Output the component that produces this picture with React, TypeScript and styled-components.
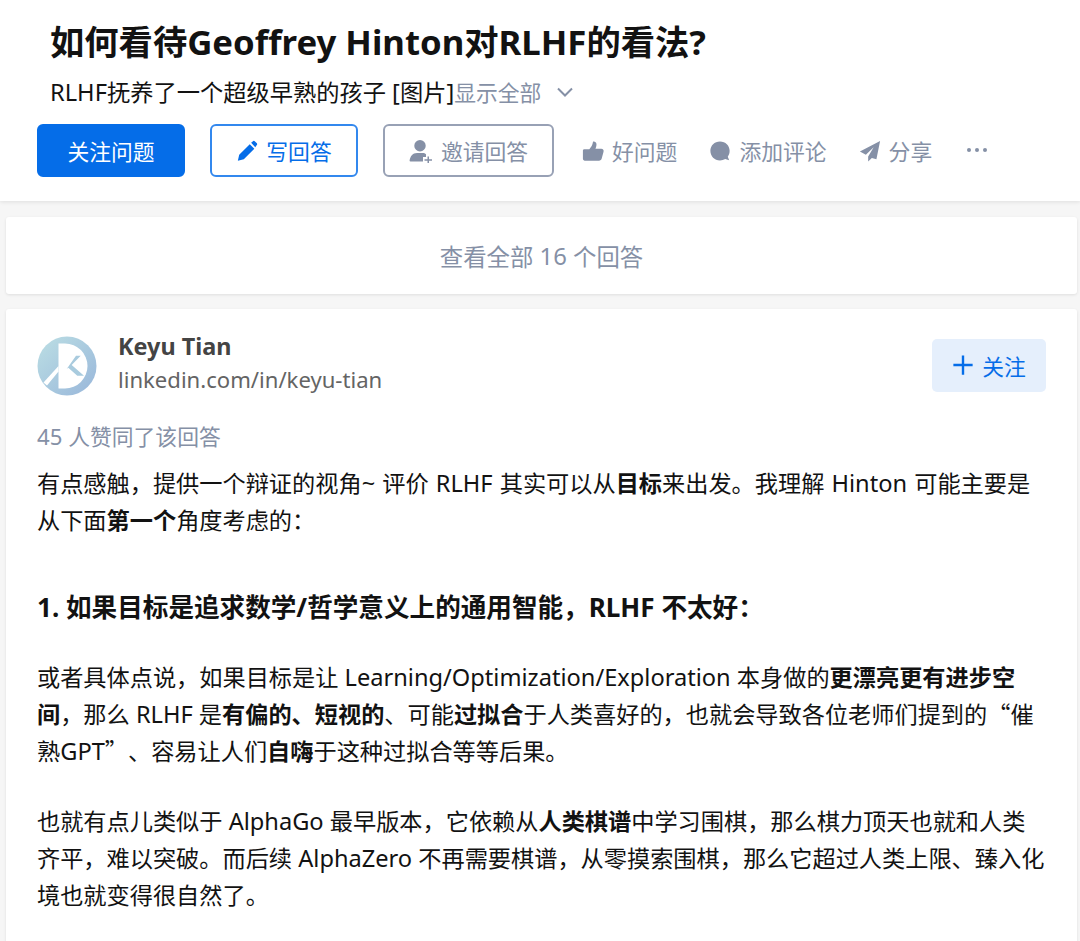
import React from "react";
import styled, { createGlobalStyle } from "styled-components";

const Global = createGlobalStyle`
  html, body { margin: 0; padding: 0; background: #f6f6f6; height: 100%; overflow: hidden; }
  body {
    font-family: "Noto Sans CJK SC", "Noto Sans", sans-serif;
    color: #121212;
    text-spacing-trim: space-all;
  }
`;

const Page = styled.div`
  width: 1080px;
  height: 941px;
  overflow: hidden;
`;
const L = styled.span`
  font-family: "Noto Sans", "Noto Sans CJK SC", sans-serif;
  font-size: 1.018em;
  line-height: 0;
`;
const Header = styled.header`
  background: #fff;
  height: 201px;
  padding: 0 34px 0 37px;
  box-sizing: border-box;
  box-shadow: 0 1px 4px rgba(18, 18, 18, 0.1);
`;
const Title = styled.h1`
  margin: 0 0 0 13px;
  padding-top: 16px;
  font-size: 34.3px;
  line-height: 48px;
  font-weight: 700;
  color: #121212;
  & > span {
    font-size: 1.013em;
  }
`;
const Excerpt = styled.div`
  margin: 9px 0 0 13px;
  font-size: 23.25px;
  line-height: 37px;
  display: flex;
  align-items: center;
  color: #121212;
`;
const More = styled.span`
  color: #8590a6;
  font-size: 21.8px;
  display: inline-flex;
  align-items: center;
`;
const Chevron = styled.svg`
  width: 20px;
  height: 20px;
  margin-left: 14px;
  fill: none;
  stroke: #8590a6;
  stroke-width: 2;
`;
const Actions = styled.div`
  display: flex;
  align-items: center;
  margin-top: 14px;
  height: 53px;
`;
const Button = styled.button<{ $w: number; $gap: number; $kind: "solid" | "line" | "muted" }>`
  width: ${(p) => p.$w}px;
  height: 53px;
  margin-right: ${(p) => p.$gap}px;
  box-sizing: border-box;
  border-radius: 6px;
  font: inherit;
  font-size: 21.8px;
  padding: 0;
  display: flex;
  align-items: center;
  justify-content: center;
  gap: 8px;
  background: ${(p) => (p.$kind === "solid" ? "#056de8" : "#fff")};
  color: ${(p) => (p.$kind === "solid" ? "#fff" : p.$kind === "line" ? "#056de8" : "#8590a6")};
  border: 2px solid ${(p) => (p.$kind === "muted" ? "#98a1b5" : p.$kind === "line" ? "#3388ee" : "#056de8")};
`;
const Ghost = styled.span<{ $gap: number }>`
  display: inline-flex;
  align-items: center;
  gap: 8px;
  font-size: 21.8px;
  color: #8590a6;
  margin-right: ${(p) => p.$gap}px;
`;
const Icon = styled.svg<{ $s?: number }>`
  width: ${(p) => p.$s ?? 22}px;
  height: ${(p) => p.$s ?? 22}px;
  fill: currentColor;
  flex: none;
`;
const Dots = styled.span`
  display: inline-flex;
  gap: 4px;
  margin-top: -2px;
`;
const Dot = styled.i`
  width: 4px;
  height: 4px;
  border-radius: 50%;
  background: #8590a6;
`;
const Card = styled.section`
  background: #fff;
  margin: 0 3px 0 6px;
  border-radius: 3px;
  box-shadow: 0 1px 3px rgba(18, 18, 18, 0.1);
`;
const ViewAll = styled(Card)`
  margin-top: 16px;
  height: 77px;
  display: flex;
  align-items: center;
  justify-content: center;
  font-size: 23.4px;
  color: #8590a6;
  white-space: pre;
`;
const Answer = styled(Card)`
  margin-top: 15px;
  padding: 26px 29px 0 31px;
  height: 700px;
`;
const Author = styled.div`
  display: flex;
  align-items: center;
  height: 62px;
`;
const Avatar = styled.svg`
  width: 60px;
  height: 60px;
  flex: none;
  margin-right: 21px;
`;
const AuthorText = styled.div`
  flex: 1;
  margin-top: -6px;
  font-family: "Noto Sans", sans-serif;
`;
const Name = styled.div`
  font-size: 23.4px;
  line-height: 33px;
  font-weight: 700;
  color: #444;
`;
const Bio = styled.div`
  font-size: 22.1px;
  line-height: 33px;
  color: #646464;
`;
const Follow = styled.button`
  width: 114px;
  height: 53px;
  margin-top: -2px;
  margin-right: 2px;
  border: 0;
  border-radius: 5px;
  background: #e5effc;
  color: #056de8;
  font: inherit;
  font-size: 21.8px;
  padding: 0;
  display: flex;
  align-items: center;
  justify-content: center;
  gap: 8px;
`;
const Votes = styled.div`
  margin-top: 22px;
  font-size: 21.8px;
  line-height: 33px;
  color: #8590a6;
`;
const P = styled.p<{ $mt: number; $ws?: number }>`
  margin: ${(p) => p.$mt}px 0 0;
  font-size: 23.2px;
  line-height: 37px;
  color: #121212;
  word-spacing: ${(p) => p.$ws ?? 0}px;
`;
const H = styled.h2`
  margin: 49px 0 0;
  font-size: 25.6px;
  line-height: 37px;
  font-weight: 700;
  color: #121212;
`;

export default function App() {
  return (
    <Page>
      <Global />
      <Header>
        <Title>如何看待<L>Geoffrey Hinton</L>对<L>RLHF</L>的看法<L>?</L></Title>
        <Excerpt>
          <span><L>RLHF</L>抚养了一个超级早熟的孩子<L> [</L>图片<L>]</L></span>
          <More>
            显示全部
            <Chevron viewBox="0 0 20 20"><path d="M3 6.5l7 7 7-7" /></Chevron>
          </More>
        </Excerpt>
        <Actions>
          <Button $w={148} $gap={25} $kind="solid">关注问题</Button>
          <Button $w={148} $gap={25} $kind="line">
            <Icon viewBox="0 0 24 24"><path d="M2 22.500l1.500-6.500L15 4.500 20 9.500 8.500 21zM16.500 3l1.700-1.500a1.800 1.800 0 0 1 2.500 0l1.800 1.800a1.800 1.800 0 0 1 0 2.500L21 8z" /></Icon>
            写回答
          </Button>
          <Button $w={171} $gap={28} $kind="muted">
            <Icon $s={24} viewBox="0 0 24 24"><path d="M11 1a5.700 5.700 0 0 1 5.700 5.900A5.700 5.700 0 0 1 11 12.500a5.700 5.700 0 0 1-5.700-5.600A5.700 5.700 0 0 1 11 1zM1.500 22.500c-.7 0-1-.4-.9-1 .6-4 3-7.500 7.400-7.500h5.500c1.500 0 2.800.5 3.500 1.300V18h-3v4.500zM18.500 17.500h1.500v2.800h3v1.500h-3v2.700h-1.500v-2.700h-3v-1.500h3z" /></Icon>
            邀请回答
          </Button>
          <Ghost $gap={32}>
            <Icon viewBox="0 0 24 24"><path d="M1 11.500c0-.8.700-1.500 1.500-1.500H8c2-2 3.500-4.500 4-8 .2-1 3.800-.6 3.800 2.500 0 2-.6 3.700-1.100 5h6.300c2 0 3 1.500 2.500 3.200l-2 7.500c-.4 1.500-1.500 2.300-3 2.300H3c-1.100 0-2-.9-2-2z" /></Icon>
            好问题
          </Ghost>
          <Ghost $gap={32}>
            <Icon viewBox="0 0 24 24"><path d="M12 1.500c6 0 10.500 4.500 10.500 10.300 0 2.500-.7 4.700-2 6.400l1.500 3.800-4.300-1.200c-1.700 1-3.600 1.500-5.700 1.500-6 0-10.500-4.500-10.500-10.500S6 1.500 12 1.500z" /></Icon>
            添加评论
          </Ghost>
          <Ghost $gap={35}>
            <Icon viewBox="0 0 24 24"><path d="M23 1 1 12.500 7.500 16 16 8 10 18v5.500l4-4 5 1.500z" /></Icon>
            分享
          </Ghost>
          <Dots><Dot /><Dot /><Dot /></Dots>
        </Actions>
      </Header>
      <ViewAll>查看全部<L> 16 </L>个回答</ViewAll>
      <Answer>
        <Author>
          <Avatar viewBox="0 0 60 60">
            <defs>
              <linearGradient id="av" x1="0" y1="0" x2="1" y2="1">
                <stop offset="0" stopColor="#bcdfe4" />
                <stop offset="1" stopColor="#98b6da" />
              </linearGradient>
            </defs>
            <circle cx="30" cy="30" r="29.500" fill="url(#av)" />
            <path d="M21.500 7.500H28A22.500 22.500 0 0 1 28 52.500H21.500z" fill="#fff" />
            <path d="M6.500 46.500 21.500 30v5.500L10 49.500z" fill="#fff" />
            <path d="M29.700 33 39 19.700h4.700L34.700 29 47 39.700h-6.700l-9-8z" fill="#a9cbde" />
          </Avatar>
          <AuthorText>
            <Name>Keyu Tian</Name>
            <Bio>linkedin.com/in/keyu-tian</Bio>
          </AuthorText>
          <Follow>
            <Icon viewBox="0 0 24 24"><path d="M10.700 1.500h2.600v9.200h9.200v2.600h-9.200v9.200h-2.600v-9.200H1.500v-2.600h9.200z" /></Icon>
            关注
          </Follow>
        </Author>
        <Votes><L>45 </L>人赞同了该回答</Votes>
        <P $mt={12} $ws={1}>有点感触，提供一个辩证的视角<L>~ </L>评价<L> RLHF </L>其实可以从<b>目标</b>来出发。我理解<L> Hinton </L>可能主要是从下面<b>第一个</b>角度考虑的：</P>
        <H><L>1. </L>如果目标是追求数学<L>/</L>哲学意义上的通用智能，<L>RLHF </L>不太好：</H>
        <P $mt={34}>或者具体点说，如果目标是让<L> Learning/Optimization/Exploration </L>本身做的<b>更漂亮更有进步空间</b>，那么<L> RLHF </L>是<b>有偏的、短视的</b>、可能<b>过拟合</b>于人类喜好的，也就会导致各位老师们提到的“催熟<L>GPT</L>”、容易让人们<b>自嗨</b>于这种过拟合等等后果。</P>
        <P $mt={33}>也就有点儿类似于<L> AlphaGo </L>最早版本，它依赖从<b>人类棋谱</b>中学习围棋，那么棋力顶天也就和人类齐平，难以突破。而后续<L> AlphaZero </L>不再需要棋谱，从零摸索围棋，那么它超过人类上限、臻入化境也就变得很自然了。</P>
      </Answer>
    </Page>
  );
}
